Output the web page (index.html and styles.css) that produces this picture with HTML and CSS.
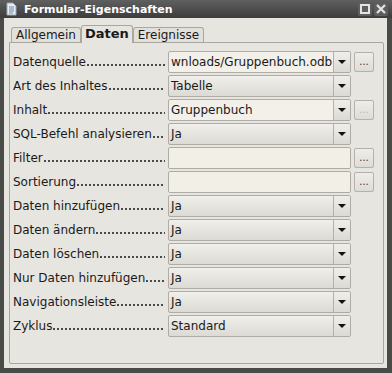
FILE: index.html
```html
<!DOCTYPE html>
<html lang="de">
<head>
    <meta charset="UTF-8">
    <title>Formular-Eigenschaften</title>
    <link rel="stylesheet" href="styles.css">
</head>
<body>
    <div class="window">
        <div class="titlebar">
            <svg class="app-icon" width="14" height="14" viewBox="0 0 14 14">
                <path d="M3 1h6l3 3v9H3z" fill="#e8ecf2" stroke="#9aa6b4"/>
                <path d="M5 5h5M5 7h5M5 9h5M5 11h4" stroke="#6d88a8"/>
            </svg>
            <span class="title">Formular-Eigenschaften</span>
            <div class="win-buttons">
                <span class="win-btn"><svg width="10" height="10" viewBox="0 0 10 10"><rect x="1" y="1" width="8" height="8" fill="none" stroke="#e4e4e4" stroke-width="2"/></svg></span>
                <span class="win-btn"><svg width="10" height="10" viewBox="0 0 10 10"><path d="M1 1l8 8M9 1l-8 8" stroke="#e4e4e4" stroke-width="2.2"/></svg></span>
            </div>
        </div>
        <div class="client">
            <div class="tabs">
                <div class="tab">Allgemein</div>
                <div class="tab active">Daten</div>
                <div class="tab">Ereignisse</div>
            </div>
            <div class="panel">
                <div class="row">
                    <label><span>Datenquelle</span><i class="leader"></i></label>
                    <div class="combo edit"><span class="value">wnloads/Gruppenbuch.odb</span><span class="arrow"></span></div>
                    <button class="dots">...</button>
                </div>
                <div class="row">
                    <label><span>Art des Inhaltes</span><i class="leader"></i></label>
                    <div class="combo"><span class="value">Tabelle</span><span class="arrow"></span></div>
                </div>
                <div class="row">
                    <label><span>Inhalt</span><i class="leader"></i></label>
                    <div class="combo edit"><span class="value">Gruppenbuch</span><span class="arrow"></span></div>
                    <button class="dots disabled">...</button>
                </div>
                <div class="row">
                    <label><span>SQL-Befehl analysieren</span><i class="leader"></i></label>
                    <div class="combo"><span class="value">Ja</span><span class="arrow"></span></div>
                </div>
                <div class="row">
                    <label><span>Filter</span><i class="leader"></i></label>
                    <div class="field"></div>
                    <button class="dots">...</button>
                </div>
                <div class="row">
                    <label><span>Sortierung</span><i class="leader"></i></label>
                    <div class="field"></div>
                    <button class="dots">...</button>
                </div>
                <div class="row">
                    <label><span>Daten hinzufügen</span><i class="leader"></i></label>
                    <div class="combo"><span class="value">Ja</span><span class="arrow"></span></div>
                </div>
                <div class="row">
                    <label><span>Daten ändern</span><i class="leader"></i></label>
                    <div class="combo"><span class="value">Ja</span><span class="arrow"></span></div>
                </div>
                <div class="row">
                    <label><span>Daten löschen</span><i class="leader"></i></label>
                    <div class="combo"><span class="value">Ja</span><span class="arrow"></span></div>
                </div>
                <div class="row">
                    <label><span>Nur Daten hinzufügen</span><i class="leader"></i></label>
                    <div class="combo"><span class="value">Ja</span><span class="arrow"></span></div>
                </div>
                <div class="row">
                    <label><span>Navigationsleiste</span><i class="leader"></i></label>
                    <div class="combo"><span class="value">Ja</span><span class="arrow"></span></div>
                </div>
                <div class="row">
                    <label><span>Zyklus</span><i class="leader"></i></label>
                    <div class="combo"><span class="value">Standard</span><span class="arrow"></span></div>
                </div>
            </div>
        </div>
    </div>
</body>
</html>
```

FILE: styles.css
```css
body {
    margin: 0;
    padding: 0;
    font-family: "DejaVu Sans", sans-serif;
    font-size: 12px;
    color: #1a1a1a;
}

.window {
    width: 392px;
    height: 373px;
    box-sizing: border-box;
    background: #4a4a48;
    padding: 0 5px 5px 4px;
    display: flex;
    flex-direction: column;
}

.titlebar {
    height: 18px;
    margin: 0 -5px 0 -4px;
    padding: 0 4px 0 4px;
    background: linear-gradient(#606060, #3c3c3c);
    display: flex;
    align-items: center;
    gap: 6px;
}

.title {
    color: #fff;
    font-weight: bold;
    font-size: 11px;
    flex: 1;
}

.win-buttons {
    display: flex;
    gap: 2px;
}

.win-btn {
    width: 14px;
    height: 13px;
    border-radius: 2px;
    background: #5e5e5c;
    display: flex;
    align-items: center;
    justify-content: center;
}

.client {
    flex: 1;
    background: #e7e5e0;
    padding: 6px 3px 4px 5px;
    display: flex;
    flex-direction: column;
}

.tabs {
    display: flex;
    align-items: flex-end;
    height: 18px;
    padding-left: 2px;
}

.tab {
    height: 14px;
    padding: 0 4px;
    border: 1px solid #a9a7a0;
    border-bottom: none;
    border-radius: 3px 3px 0 0;
    background: #e2e0da;
    line-height: 15px;
    font-size: 12px;
}

.tab.active {
    height: 17px;
    padding: 0 3px;
    font-weight: bold;
    font-size: 13px;
    background: #e7e5e0;
    position: relative;
    top: 1px;
    line-height: 16px;
}

.panel {
    flex: 1;
    border: 1px solid #a9a7a0;
    border-radius: 0 2px 2px 2px;
    padding: 8px 0 0 3px;
    display: flex;
    flex-direction: column;
    gap: 2px;
}

.row {
    display: grid;
    grid-template-columns: 152px 183px 20px;
    column-gap: 3px;
    height: 22px;
    align-items: center;
}

.row label {
    display: flex;
    align-items: center;
    white-space: nowrap;
    font-size: 12px;
    line-height: 14px;
}

.leader {
    flex: 1;
    height: 14px;
    background-image: repeating-linear-gradient(to right, #4a4a4a 0 2px, transparent 2px 4px);
    background-size: 100% 2px;
    background-position: 1px 9px;
    background-repeat: no-repeat;
}

.combo {
    height: 20px;
    border: 1px solid #aeaca5;
    border-radius: 2px;
    background: linear-gradient(#f0efeb, #dcdad4);
    display: flex;
    align-items: center;
}

.combo.edit {
    background: #f2f0e8;
}

.combo .value {
    flex: 1;
    padding-left: 2px;
    white-space: nowrap;
    overflow: hidden;
    font-size: 12px;
}

.combo .arrow {
    width: 16px;
    height: 20px;
    border-left: 1px solid #b3b1aa;
    background: linear-gradient(#efeeea, #dcdad4);
    position: relative;
}

.combo .arrow::after {
    content: "";
    position: absolute;
    left: 4px;
    top: 8px;
    border-left: 4px solid transparent;
    border-right: 4px solid transparent;
    border-top: 4px solid #111;
}

.field {
    height: 20px;
    border: 1px solid #aeaca5;
    border-radius: 2px;
    background: #f2efe6;
}

.dots {
    width: 20px;
    height: 20px;
    padding: 0;
    border: 1px solid #b3b1aa;
    border-radius: 2px;
    background: linear-gradient(#eeede9, #dedcd6);
    font-family: "DejaVu Sans", sans-serif;
    font-size: 10px;
    color: #333;
    line-height: 14px;
}

.dots.disabled {
    color: #b8b6b0;
}
```
